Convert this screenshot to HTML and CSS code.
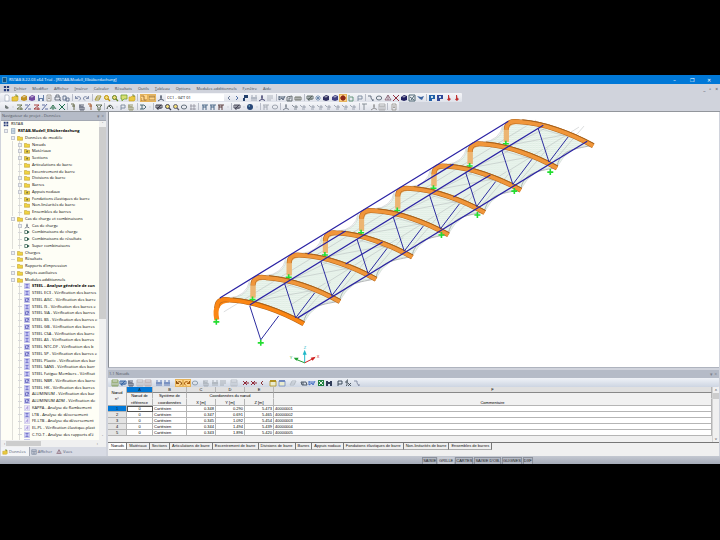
FILE: index.html
```
<!DOCTYPE html>
<html lang="fr">
<head>
<meta charset="utf-8">
<title>RSTAB 8.22.03 x64 Trial - [RSTAB-Modell_Elbüberdachung]</title>
<link rel="stylesheet" href="styles.css">
</head>
<body>
<div class="app">
  <header class="titlebar">
    <span class="logo"></span><span class="caption">RSTAB 8.22.03 x64 Trial - [RSTAB-Modell_Elbüberdachung]</span>
    <button class="win" aria-label="Réduire">–</button><button class="win" aria-label="Restaurer">❐</button><button class="win" aria-label="Fermer">✕</button>
  </header>
  <nav class="menubar">
    <span class="applogo" data-icon="grid"></span>
    <button><u>F</u>ichier</button><button><u>M</u>odifier</button><button><u>A</u>fficher</button><button><u>I</u>nsérer</button><button><u>C</u>alculer</button><button><u>R</u>ésultats</button><button><u>O</u>utils</button><button><u>T</u>ableau</button><button>O<u>p</u>tions</button><button>Modules additionnels</button><button>F<u>e</u>nêtre</button><button>Ai<u>d</u>e</button>
    <span class="mdi"><button aria-label="Réduire la vue">_</button><button aria-label="Restaurer la vue">▫</button><button aria-label="Fermer la vue">×</button></span>
  </nav>
  <div class="toolbars">
    <div class="toolbar main-tools">
      <span class="tools" data-tools="page open cube:#c09020 cube:#7048a0 save sheet print cam | undo redo | plane find:#c09000 find:#608020 mark open | hand* frame* axis"></span>
      <select class="loadcase" aria-label="Cas de charge"><option>CC1 - GZT 01</option></select>
      <span class="tools grow" data-tools="prev next pin chart axis:#303060 rows | beam house wall | net star cube:#303060 cube:#404080 target* vert flag | curve ring tri cross cube:#202060 snow jet | win:#2060a8 win:#304898 man man"></span>
    </div>
    <div class="toolbar edit-tools">
      <span class="tools grow" data-tools="dot arrow node line node:#a03030 line fork cross:#207050 | rod stack rod:#a05020 funnel | arch arrow flag stack:#909060 | load arrow | net:#303040 find:#404050 find:#606070 ring dots | gate gate gate:#503030 arrow | net:#404050 arrow ball arrow | gate:#a0a6b0 ring:#a0a6b0 | axis:#707884 vee:#707884 vee vee vee vee vee vee vee | corner axis:#888 table:#999 | sheet"></span>
    </div>
  </div>
  <div class="workspace">
    <aside class="navigator">
      <h2 class="panel-title"><span>Navigateur de projet - Données</span><span class="tiny">▾ ×</span></h2>
      <div class="treebox">
        <ul class="tree" id="tree"></ul>
        <div class="vscroll"><i>˄</i><b class="long"></b><i>˅</i></div>
      </div>
      <div class="hscroll"><i>‹</i><b></b><i>›</i></div>
      <div class="navtabs"><button class="on"><span data-icon="open"></span>Données</button><button><span data-icon="table"></span>Afficher</button><button><span data-icon="tri"></span>Vues</button></div>
    </aside>
    <main class="content">
      <section class="viewport"><svg id="model" viewBox="108 113 611 255" role="img" aria-label="Modèle 3D"></svg></section>
      <section class="data">
        <h2 class="panel-title"><span>1.1 Nœuds</span><span class="tiny">▾ ×</span></h2>
        <div class="toolbar table-tools"><span class="tools grow" data-tools="table:#709030 net:#3060a0 stack table:#b0a8a8 table:#b09898 | chart:#5070b0 chart:#5070b0 | undo:#804000* redo:#a05000* ring:#90a0b0 | stack:#a0a8b0 chart:#a0a8b0 rows:#a0a8b0 | table:#b0b4bc | delete delete prev:#802020 | card:#b09020 card:#7088c0 | plane:#b0b8c0 | eye beam:#3060c0 excel bino | flag:#304050 fx curve:#8088a0"></span></div>
        <div class="gridbox">
          <table>
            <colgroup><col class="c0"><col class="c1"><col class="c2"><col class="c3"><col class="c4"><col class="c5"><col></colgroup>
            <thead>
              <tr class="letters"><th rowspan="3">Nœud<br>n°</th><th class="sel">A</th><th>B</th><th>C</th><th>D</th><th>E</th><th>F</th></tr>
              <tr><th>Nœud de</th><th>Système de</th><th colspan="3">Coordonnées du nœud</th><th></th></tr>
              <tr class="units"><th>référence</th><th>coordonnées</th><th>X [m]</th><th>Y [m]</th><th>Z [m]</th><th>Commentaire</th></tr>
            </thead>
            <tbody>
              <tr><th class="sel">1</th><td class="cur">0</td><td>Cartésien</td><td>0.348</td><td>0.290</td><td>5.473</td><td>40000001</td></tr>
              <tr><th>2</th><td>0</td><td>Cartésien</td><td>0.347</td><td>0.691</td><td>5.465</td><td>40000002</td></tr>
              <tr><th>3</th><td>0</td><td>Cartésien</td><td>0.345</td><td>1.092</td><td>5.454</td><td>40000003</td></tr>
              <tr><th>4</th><td>0</td><td>Cartésien</td><td>0.344</td><td>1.494</td><td>5.439</td><td>40000004</td></tr>
              <tr><th>5</th><td>0</td><td>Cartésien</td><td>0.343</td><td>1.896</td><td>5.420</td><td>40000005</td></tr>
            </tbody>
          </table>
          <div class="vscroll"><i>˄</i><b></b><i>˅</i></div>
        </div>
        <div class="sheets"><button class="on">Nœuds</button><button>Matériaux</button><button>Sections</button><button>Articulations de barre</button><button>Excentrement de barre</button><button>Divisions de barre</button><button>Barres</button><button>Appuis nodaux</button><button>Fondations élastiques de barre</button><button>Non-linéarités de barre</button><button>Ensembles de barres</button></div>
      </section>
    </main>
  </div>
  <footer class="status"><button>SAISIE</button><button class="on">GRILLE</button><button>CARTES</button><button>SAISIE D'OB.</button><button>GLIGNES</button><button>DXF</button></footer>
</div>
<script src="app.js"></script>
</body>
</html>
```
FILE: styles.css
```
* { box-sizing: border-box; }
body { margin: 0; height: 100vh; padding: 75px 0 76px; background: #000; color: #222; font: 4px/6px "Open Sans", "Noto Sans", sans-serif; overflow: hidden; }
button, select { font: inherit; color: inherit; margin: 0; padding: 0; border: 0; background: none; white-space: nowrap; }
svg { display: block; }
.app { height: 100%; display: flex; flex-direction: column; background: #d0d3dc; }
.titlebar { height: 9px; flex: none; display: flex; align-items: center; background: #0078d7; color: #fff; padding: 0 3px 0 2px; }
.logo { width: 5px; height: 6px; background: #17517b; border: 1px solid #4e9ccd; margin-right: 2px; }
.caption { flex: 1; }
.win { width: 17px; font-size: 5px; text-align: center; }
.menubar { height: 9px; flex: none; display: flex; align-items: center; gap: 6px; padding-left: 3px; color: #40454e; }
.applogo { width: 7px; height: 7px; margin-right: -2px; }
.menubar u { text-underline-offset: 0; text-decoration-color: #9a9ea6; }
.mdi { margin-left: auto; display: flex; gap: 4px; padding-right: 2px; font-size: 5px; }
.toolbars { flex: none; height: 19px; border-bottom: 1px solid #92969c; }
.toolbar { height: 9px; display: flex; align-items: center; background: linear-gradient(#f5f6f9, #dfe2ea); border-radius: 1px; padding: 0 1px 0 3px; }
.main-tools { max-width: 462px; }
.edit-tools { max-width: 399px; }
.tools { display: flex; align-items: center; }
.main-tools .tools:first-child { width: 162px; justify-content: space-between; }
.tools.grow { flex: 1; justify-content: space-between; }
.tool { width: 8px; height: 8px; flex: none; }
.tool.narrow { width: 4px; }
.tool.hot { background: #ffd58a; outline: 1px solid #e6b45c; outline-offset: -1px; }
.sep { width: 1px; height: 7px; margin: 0 1px; background: #b9bdc8; flex: none; }
.tool svg, [data-icon] svg { width: 100%; height: 100%; }
.loadcase { width: 58px; height: 7px; background: #fff; color: #000; appearance: none; padding-left: 1px; margin: 0 1px; }
.workspace { flex: 1; min-height: 0; display: flex; gap: 2px; }
.navigator { width: 106px; flex: none; display: flex; flex-direction: column; padding-left: 1px; }
.panel-title { margin: 0; height: 8px; flex: none; display: flex; align-items: center; justify-content: space-between; padding: 0 2px 0 1px; font: 4px/6px "Open Sans", sans-serif; color: #50555f; background: #b5bbc7; }
.tiny { color: #7b808a; font-size: 5px; }
.treebox { flex: 1; min-height: 0; display: flex; background: #fefef6; border-top: 1px solid #a3a8b2; overflow: hidden; }
.tree { flex: 1; min-width: 0; height: 324px; margin: 0; padding: 0; list-style: none; display: grid; grid-auto-rows: 1fr; color: #000; overflow: hidden; }
.tree li { display: flex; align-items: center; gap: 2px; white-space: nowrap; min-height: 0; min-width: 0; }
.tree .icon { width: 6px; height: 6px; flex: none; }
.tree .exp { width: 4px; height: 4px; flex: none; border: 1px solid #c5c8d0; background: #eceef2; }
.tree .leaf { width: 4px; height: 1px; flex: none; background: #d6d7d9; }
.l0 { padding-left: 2px; }
.l1 { padding-left: 3px; }
.l2 { padding-left: 10px; }
.l3 { padding-left: 17px; background: linear-gradient(#deded8, #deded8) 11px 0 / 1px 100% no-repeat, linear-gradient(#deded8, #deded8) 18px 0 / 1px 100% no-repeat; }
.strong { font-weight: 700; color: #000; }
.vscroll { width: 7px; flex: none; display: flex; flex-direction: column; justify-content: space-between; align-items: center; background: #f0f0f0; overflow: hidden; }
.vscroll i, .hscroll i { font-style: normal; color: #444; }
.vscroll b { width: 100%; height: 6px; background: #cdcdcd; margin-bottom: auto; }
.vscroll .long { height: 192px; }
.hscroll { height: 7px; flex: none; display: flex; align-items: center; gap: 1px; background: #f0f0f0; padding: 0 8px 0 3px; }
.hscroll b { width: 35px; height: 5px; background: #cdcdcd; margin-right: auto; }
.navtabs { height: 9px; flex: none; display: flex; color: #4f5a74; background: #d8dbe4; }
.navtabs button { display: flex; align-items: center; gap: 1px; padding: 0 3px 0 1px; }
.navtabs .on { background: #f3f4f7; border-right: 1px solid #a4a9b5; }
.navtabs span { width: 6px; height: 6px; }
.content { flex: 1; min-width: 0; display: flex; flex-direction: column; margin-right: 1px; }
.viewport { flex: 1; min-height: 0; background: #fff; border-left: 1px solid #8a8e95; border-bottom: 1px solid #aeb3be; }
.viewport svg { width: 100%; height: 100%; }
.data { flex: none; background: #f0f0f0; border-top: 2px solid #d0d3dc; padding-bottom: 6px; font-family: "Liberation Sans", Arial, sans-serif; }
.table-tools { background: linear-gradient(#eff2f7, #cdd5e2); }
.table-tools .tools { max-width: 250px; }
.table-tools .sep { background: none; }
.gridbox { display: flex; height: 56px; border-bottom: 1px solid #777; align-items: stretch; }
.gridbox .vscroll { border-left: 1px solid #d2d2d2; }
table { flex: 1; width: 100%; table-layout: fixed; border-collapse: separate; border-spacing: 0; align-self: flex-start; font-size: 4px; line-height: 5px; color: #000; }
.c0 { width: 19px; } .c1 { width: 26px; } .c2 { width: 34px; } .c3, .c4, .c5 { width: 29px; }
th, td { height: 6px; padding: 0 1px; border: 0 solid #b5b5b5; border-width: 0 1px 1px 0; font-weight: 400; white-space: nowrap; overflow: hidden; }
thead th { background: #f1f1f1; border-bottom-color: #f1f1f1; }
thead .units th { height: 7px; border-bottom-color: #b5b5b5; }
.letters th { background: #e0e0e0; border-bottom-color: #888; }
.letters th:first-child { background: #f1f1f1; vertical-align: middle; line-height: 6px; border-bottom-color: #aaa; }
tbody th { background: #e4e4e4; }
td { background: #fff; text-align: right; }
td:nth-child(2) { text-align: center; }
td:nth-child(3), td:last-child { text-align: left; }
.letters .sel, .sel { background: #0078d7; color: #123; }
.cur { outline: 1px solid #555; outline-offset: -1px; }
.sheets { height: 7px; display: flex; padding-left: 1px; font-size: 4px; color: #111; }
.sheets button { padding: 0 2px; border-right: 1px solid #777; border-bottom: 1px solid #aaa; }
.sheets .on { background: #fff; }
.status { height: 8px; flex: none; display: flex; justify-content: flex-end; align-items: center; gap: 1px; padding-right: 26%; background: linear-gradient(#c4c8d1, #a5abb8); color: #222; font: 4px/5px "Liberation Sans", sans-serif; }
.status button { height: 7px; border: 1px solid #8b909b; border-width: 1px 1px 0 1px; background: #b3b8c3; }
.status .on { background: #c6cad3; border-color: #c6cad3; }
.roof { fill: url(#hatch); stroke: #a8b8b0; stroke-width: .4; }
.edge { fill: none; stroke: #84898c; stroke-width: .6; }
.cable { fill: none; stroke: #a5aaac; stroke-width: .4; }
.steel { fill: none; stroke: #2a22a4; stroke-width: 1.2; }
.brace { fill: none; stroke: #2c2ca0; stroke-width: 1; }
.arch-dark { fill: none; stroke: #b3661c; stroke-width: 5; }
.arch { fill: none; stroke: #f0963a; stroke-width: 4; }
.arch-top { fill: none; stroke: #a86018; stroke-width: 1; }
.leg { fill: none; stroke: #ecb572; stroke-width: 5; }
.leg.front { stroke: #fb8614; }
.arch.front { stroke: #fb8614; }
.support { stroke: #22dd30; stroke-width: 1.6; fill: none; }
.axis-label { font: 4px "Liberation Sans", sans-serif; }
```
FILE: app.js
```
const stroke = (d, w = 0.9) => `<path d="${d}" fill="none" stroke="currentColor" stroke-width="${w}"/>`;
const fill = d => `<path d="${d}" fill="currentColor"/>`;
// name: [default colour, drawing on an 8 x 8 grid]
const icons = {
  page: ['#8a95a8', '<path d="M2 1h3l1 1v5H2z" fill="#fff" stroke="currentColor" stroke-width=".5"/>'],
  open: ['#c9a020', '<path d="M1 3h2l1-1h3v4L6 7H1z" fill="#e8c840" stroke="currentColor" stroke-width=".6"/><path d="M4 1h2v2" fill="none" stroke="#608030" stroke-width=".7"/>'],
  folder: ['#b8962a', '<path d="M.5 2h3l.6 1h3.4v4h-7z" fill="#f0d440" stroke="currentColor" stroke-width=".7"/>'],
  folder2: ['#a8861c', '<path d="M.5 2h3l.6 1h3.4v4h-7z" fill="#ecd03c" stroke="currentColor" stroke-width=".7"/><path d="M3 3.6h2.4v2.2H3z" fill="#7c7438"/>'],
  cube: ['#303060', fill('M1 3l3-2 3 1v4L4 7 1 6z') + '<path d="M2 3l2-1 2 .6-2 1z" fill="#eee" opacity=".7"/>'],
  save: ['#6880a8', fill('M1 1h6v6H1z') + '<path d="M2 1h4v3H2zM3 5h2v2H3z" fill="#e8edf6"/>'],
  sheet: ['#8a8478', stroke('M2 1h4v6H2zM3 3h2M3 4.5h2', 0.7)],
  print: ['#606a78', stroke('M2 3V1h3v2M1 3h5v3H1zM5 5l2 2')],
  cam: ['#5c6c88', stroke('M1 2h3v4H1zM4 4h3v3H4z')],
  undo: ['#7884a4', stroke('M1.5 2v2.5H4M1.5 4.5C3 2 7 2 6.5 5L5 6.5')],
  redo: ['#7884a4', stroke('M6.5 2v2.5H4M6.5 4.5C5 2 1 2 1.5 5L3 6.5')],
  plane: ['#a09020', stroke('M1 6l2-4h4L5 6zM2 4h4')],
  find: ['#506080', '<circle cx="3.5" cy="3.5" r="2" fill="#f1dc78" stroke="currentColor"/>' + stroke('M5 5l2 2', 1.2)],
  mark: ['#70a030', '<path d="M1 1h6v4H4L2 7V5H1z" fill="#d8df70" stroke="currentColor" stroke-width=".8"/>'],
  hand: ['#a07030', stroke('M1 2h3v4h3M1 4v3h5', 0.9)],
  frame: ['#a88040', stroke('M1 2h6v4H1zM1 3h6')],
  axis: ['#40485c', stroke('M4 1v4L1 7M4 5l3 1.5M3 3h2')],
  prev: ['#60708c', stroke('M5 2L3 4l2 2')],
  next: ['#40609c', stroke('M3 2l2 2-2 2')],
  pin: ['#24406c', fill('M2 1h4v3H3v3H1V4h1z')],
  chart: ['#9aa2b0', stroke('M2 1v6M4 3v4M6 1v6M1 4h6')],
  rows: ['#a8aeb8', stroke('M1 2h6M1 4h6M1 6h4')],
  beam: ['#405068', stroke('M1 2v4l3-2 1 2 2-4M1 3h5')],
  house: ['#5a6266', stroke('M1 7V3l5-1v5zM3 7V4h2')],
  wall: ['#686c60', stroke('M1 6V3h6v3zM3 3v3M5 3v3')],
  net: ['#52605c', stroke('M1 2h6v3H1zM3 2v5M5 2v4M2 6l4-4')],
  star: ['#5878a0', stroke('M4 1v6M1 4h6M2 2l4 4M6 2L2 6', 0.7)],
  target: ['#8c2818', '<circle cx="4" cy="4" r="2.5" fill="currentColor"/>' + stroke('M4 0v8M1 4h6', 0.7)],
  vert: ['#588c70', stroke('M2 1v6h4V3H3')],
  flag: ['#78889c', stroke('M2 7V2h4v3H2')],
  curve: ['#5c6878', stroke('M1 2h3v2l2 3M5 6h2')],
  ring: ['#687480', '<ellipse cx="4" cy="4" rx="2.7" ry="2" fill="none" stroke="currentColor"/>'],
  tri: ['#8c6878', stroke('M4 1L1 6h6zM4 1v5')],
  cross: ['#903040', stroke('M1 1l6 6M7 1L1 7', 1)],
  snow: ['#3c5864', stroke('M1 1h6v6H1zM2 3l4 3M6 2L3 6')],
  jet: ['#3c64a0', fill('M0 2l4 1 3-1-2 4-2-1z')],
  win: ['#2060a8', fill('M1 1h6v4H4v2H1z') + '<path d="M3 2h2v2H3z" fill="#cbe3ef"/>'],
  man: ['#c03030', fill('M3 1h1l.5 3L6 5 4 7 2 5.500l1-1z')],
  node: ['#606c40', stroke('M1 2h5L1 6h6M5 4v3')],
  dot: ['#707878', fill('M2 2l2 1 2 2-2 1-2-1z')],
  arrow: ['#606878', fill('M3 3.5h2L4 5z')],
  line: ['#506098', stroke('M1 7l5-6M4 6h3M1 2h3')],
  fork: ['#387858', stroke('M1 6l3-4 3 4M4 2v5M2 5h4')],
  rod: ['#5c6040', stroke('M2 1h3v6M3 3h3')],
  stack: ['#4c5468', stroke('M1 2h5M1 4h5v3H2V2M4 3v4')],
  funnel: ['#506044', stroke('M1 2h6L5 4v3H3V4z')],
  arch: ['#404c44', stroke('M1 6c1-5 5-5 6 0M3 3l2 2', 1)],
  load: ['#40606c', stroke('M1 2h4l2 2-2 2H1M3 2v4')],
  dots: ['#787888', stroke('M2 1v6M5 1v6M1 3h6M1 6h6', 0.6)],
  gate: ['#405e80', stroke('M1 2h6M2 2v5M5 2v5M2 4h3')],
  ball: ['#284878', '<circle cx="4" cy="4" r="3" fill="currentColor"/><path d="M2 3l2-1v2z" fill="#78b0c0"/>'],
  vee: ['#9098a4', stroke('M1 2l2 2h4M5 2v3M3 6h3', 0.8)],
  corner: ['#808890', stroke('M1 1h5M3 1v6')],
  table: ['#607088', stroke('M1 1h6v6H1zM1 3h6M3 3v4M5 3v4', 0.7)],
  delete: ['#902838', stroke('M1 2l4 4M5 2L1 6M4 4h3', 1)],
  card: ['#8090b0', '<path d="M1 2h6v5H1z" fill="#e9ebcf" stroke="currentColor" stroke-width=".8"/>' + fill('M1 1h6v2H1z')],
  eye: ['#404c5c', stroke('M1 3h5l1 3H2zM3 3v3')],
  excel: ['#208040', fill('M1 1h6v6H1z') + '<path d="M2 2l4 4M6 2L2 6" stroke="#fff" stroke-width=".9"/>'],
  bino: ['#303c58', fill('M1 2h2v1h2V2h2v5H5V5H3v2H1z')],
  fx: ['#303c48', stroke('M4 1H3v5l-1 1M1 3h3M4 4l3 3M7 4L4 7', 0.8)],
  grid: ['#263a78', fill('M1 1h2.5v2.5H1zM4.5 1H7v2.5H4.5zM1 4.5h2.5V7H1zM4.5 4.5H7V7H4.5z')],
  module: ['#5c5cc0', '<path d="M.5 .5h7v7h-7z" fill="#c9c9f4" stroke="#9696d8" stroke-width=".5"/>' + stroke('M2 2h4M4 2v4M2 6h4', 0.9)],
  module2: ['#4c4cac', '<path d="M.5 .5h7v7h-7z" fill="#c4c6f0" stroke="#9696d8" stroke-width=".5"/>' + stroke('M2 2v4h4M3 2h3v2H4', 0.9)],
  module3: ['#8870c8', '<path d="M.5 .5h7v7h-7z" fill="#ebe8fb" stroke="#a9a4d8" stroke-width=".5"/>' + stroke('M2 6l3-4v4', 0.8)],
  combo: ['#285848', stroke('M1 2h3M1 2v4h3', 0.9) + fill('M4 1.500l3.500 2.500L4 6.500z')],
  doc: ['#7c94ac', '<path d="M2 .5h4.5v7H2z" fill="#d5e2ec" stroke="currentColor" stroke-width=".8"/>' + stroke('M3 3h3M3 5h3', 0.6)]
};
const draw = (name, color) => `<svg viewBox="0 0 8 8" style="color:${color || icons[name][0]}" aria-hidden="true">${icons[name][1]}</svg>`;

document.querySelectorAll('[data-icon]').forEach(el => { el.innerHTML = draw(el.dataset.icon); });
document.querySelectorAll('[data-tools]').forEach(el => {
  el.innerHTML = el.dataset.tools.split(' ').map(t => {
    if (t === '|') return '<span class="sep"></span>';
    const [name, color] = t.replace('*', '').split(':');
    return `<button class="tool${t.endsWith('*') ? ' hot' : ''}${name === 'arrow' ? ' narrow' : ''}" aria-label="${name}">${draw(name, color)}</button>`;
  }).join('');
});

// level | expander | icon | text
const tree = `0||grid|RSTAB
1|+|doc|RSTAB-Modell_Elbüberdachung|strong
2|+|folder|Données de modèle
3|+|folder|Nœuds
3|+|folder2|Matériaux
3|+|folder2|Sections
3||folder|Articulations de barre
3||folder|Excentrement de barre
3|+|folder|Divisions de barre
3|+|folder|Barres
3|+|folder2|Appuis nodaux
3||folder2|Fondations élastiques de barre
3||folder|Non-linéarités de barre
3||folder|Ensembles de barres
2|+|folder|Cas de charge et combinaisons
3|+|axis|Cas de charge
3||combo|Combinaisons de charge
3||combo|Combinaisons de résultats
3||combo|Super combinaisons
2|+|folder|Charges
2||folder|Résultats
2||folder|Rapports d'impression
2|+|folder|Objets auxiliaires
2|+|folder|Modules additionnels
3||module|STEEL - Analyse générale de con|strong
3||module|STEEL EC3 - Vérification des barres
3||module2|STEEL AISC - Vérification des barre
3||module|STEEL IS - Vérification des barres e
3||module2|STEEL SIA - Vérification des barres
3||module2|STEEL BS - Vérification des barres e
3||module2|STEEL GB - Vérification des barres
3||module|STEEL CSA - Vérification des barre
3||module|STEEL AS - Vérification des barres
3||module2|STEEL NTC-DF - Vérification des b
3||module2|STEEL SP - Vérification des barres e
3||module|STEEL Plastic - Vérification des bar
3||module|STEEL SANS - Vérification des barr
3||module|STEEL Fatigue Members - Vérificat
3||module2|STEEL NBR - Vérification des barre
3||module|STEEL HK - Vérification des barres
3||module2|ALUMINIUM - Vérification des bar
3||module2|ALUMINIUM ADM - Vérification de
3||module3|KAPPA - Analyse de flambement
3||module|LTB - Analyse de déversement
3||module3|FE-LTB - Analyse du déversement
3||module3|EL-PL - Vérification élastique-plast
3||module|C-TO-T - Analyse des rapports d'é
3||module|PLATE-BUCKLING - Analyse de`;
document.getElementById('tree').innerHTML = tree.split('\n').map(row => {
  const [level, exp, icon, text, cls] = row.split('|');
  const mark = level === '0' ? '' : `<span class="${exp ? 'exp' : 'leaf'}"></span>`;
  return `<li class="l${level} ${cls || ''}">${mark}<span class="icon">${draw(icon)}</span><span>${text}</span></li>`;
}).join('');

// Nine arches repeated along the axis of the roof
const DX = 36.25, DY = -22.3;
const at = (i, s) => `<g transform="translate(${i * DX} ${i * DY})">${s}</g>`;
const path = (cls, d) => `<path class="${cls}" d="${d}"/>`;
const cross = (x, y) => path('support', `M${x - 3} ${y}h6M${x} ${y - 3}v6`);
const bow = 'M216 309C216 301 221 300 229 301C252 302 280 312 303 325';
let m = `<defs><pattern id="hatch" width="3" height="2" patternUnits="userSpaceOnUse"><rect width="3" height="2" fill="#f1f8f3"/><path d="M0 .6L3 1" stroke="#cde2d3" stroke-width=".6"/></pattern></defs>`;
for (let i = 7; i >= 0; i--) {
  m += at(i, path('roof', 'M228 300C252 301 280 311 303 324Q314 302 339 302C314 288 288 279 262 277Q248 280 248 288Q244 298 228 300Z')
    + path('edge', 'M303 323C307 305 324 306 339 302')
    + path('cable', 'M223 313L282 277M249 306L290 286M300 318L330 283M245 304L320 290M284 285L315 294M290 306L325 284M228 299Q246 298 249 281'));
}
for (let i = 8; i >= 0; i--) {
  m += at(i, path('leg' + (i ? '' : ' front'), i ? 'M216 321V308Q217 302 225 301' : 'M216 321Q212 302 228 301')
    + path('arch-dark', bow) + path('arch' + (i ? '' : ' front'), bow) + `<g transform="translate(0 -1)">${path('arch-top', 'M232 300C254 302 280 311 304 324')}</g>` + (i ? path('leg', 'M216 321V309') + cross(215.5, 323) : ''));
}
m += path('steel', 'M219 299L508 122M249 306L543 126M297 319L587 142');
m += path('steel', 'M307 255L345 232M345 265L382 243M417 187L453 165M453 198L490 176');
m += path('brace', 'M249 307L260 341L278 317');
for (let i = 0; i < 8; i++) m += at(i, path('brace', 'M284 285L295 319L314 294'));
m += cross(215.5, 323) + cross(260, 344) + cross(441, 236) + cross(477, 216) + cross(514, 192) + cross(550, 173);
m += '<g fill="none"><path d="M304 364V354" stroke="#20b8c8"/><path d="M304 364L314 359" stroke="#d02020"/><path d="M304 364L294 360" stroke="#20a030"/></g>';
m += '<path d="M302 356L304 351L306 356Z" fill="#20b8c8"/><path d="M310 359L315 358L312 362Z" fill="#d02020"/><path d="M298 359L293 359L296 362Z" fill="#20a030"/>';
m += '<text class="axis-label" x="316" y="359" fill="#d02020">X</text><text class="axis-label" x="289" y="360" fill="#20a030">Y</text><text class="axis-label" x="303" y="350" fill="#20b8c8">Z</text>';
document.getElementById('model').innerHTML = m;
```
